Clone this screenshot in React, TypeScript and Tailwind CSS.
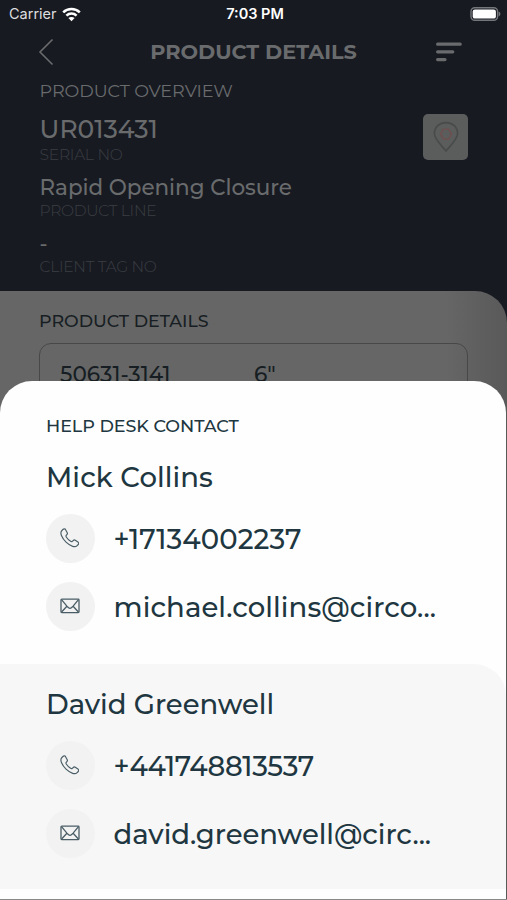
import clsx from 'clsx';
import React from 'react';

interface Contact {
  name: string;
  phone: string;
  email: string;
  nameClass: string;
  phoneClass: string;
  emailClass: string;
}

const contacts: Contact[] = [
  {
    name: 'Mick Collins',
    phone: '+17134002237',
    email: 'michael.collins@circo...',
    nameClass: 'tracking-[0.1px]',
    phoneClass: 'tracking-[0.1px]',
    emailClass: 'tracking-[0.1px]',
  },
  {
    name: 'David Greenwell',
    phone: '+441748813537',
    email: 'david.greenwell@circ...',
    nameClass: 'tracking-[-0.05px]',
    phoneClass: 'tracking-[-0.3px]',
    emailClass: 'tracking-[-0.05px]',
  },
];

const WifiIcon = () => (
  <svg width="19" height="15" viewBox="0 0 19 15" fill="none" stroke="#fff" strokeWidth="2.5">
    <path d="M1.2 5.4C5.8 0.9 13.2 0.9 17.8 5.4" />
    <path d="M4.4 8.7C7.3 5.9 11.7 5.9 14.6 8.7" />
    <path d="M9.5 14.2L6.4 11.1C8.2 9.5 10.8 9.5 12.6 11.1Z" fill="#fff" stroke="none" />
  </svg>
);

const BatteryIcon = () => (
  <svg width="31" height="14" viewBox="0 0 31 14" fill="none">
    <rect x="1" y="0.7" width="26.6" height="12.6" rx="3.8" stroke="#75777b" strokeWidth="1.4" />
    <rect x="2.7" y="2.4" width="23.2" height="9.2" rx="2.2" fill="#fff" />
    <path d="M28.6 4.6C31 5.4 31 8.6 28.6 9.4Z" fill="#75777b" />
  </svg>
);

const BackIcon = () => (
  <svg width="16" height="28" viewBox="0 0 16 28" fill="none" stroke="#696b6d" strokeWidth="1.6">
    <path d="M14.5 1.5L2 14L14.5 26.5" />
  </svg>
);

const SortIcon = () => (
  <svg width="26" height="20" viewBox="0 0 26 20" stroke="#696b6d" strokeWidth="3.2" strokeLinecap="round">
    <path d="M1.6 2.2H24.2M1.6 9.8H16.8M1.6 17.6H9" />
  </svg>
);

const PinIcon = () => (
  <svg width="26" height="32" viewBox="0 0 26 32" fill="none" strokeWidth="1.6">
    <path d="M13 30C9 25 1.4 18.5 1.4 12.6C1.4 6 6.5 1.6 13 1.6S24.6 6 24.6 12.6C24.6 18.5 17 25 13 30Z" stroke="#484b4a" />
    <path d="M7.5 13L10.2 8.3H15.8L18.4 13L15.8 18H10.6Z" stroke="#6d5050" strokeLinejoin="round" />
  </svg>
);

const PhoneIcon = () => (
  <svg width="19.5" height="19.5" viewBox="0 0 20 20" fill="none" stroke="#4a5d66" strokeWidth="1.2" strokeLinejoin="round">
    <path d="M5.3 1.1C4.5 0.6 3.7 0.8 3 1.5L1.8 2.8C0.6 4.1 0.8 6.1 1.6 8C2.5 10.2 4.1 12.5 6.2 14.5C8.4 16.6 10.8 18.1 13 18.8C15 19.4 16.5 19.1 17.6 18L18.7 16.9C19.4 16.2 19.4 15.3 18.7 14.7L15.7 12.6C15 12.1 14.2 12.2 13.6 12.8L12.6 13.7C12.1 14.2 11.5 14.1 10.9 13.7C9.2 12.6 7.6 11 6.4 9.2C6 8.6 6 8 6.4 7.5L7.2 6.6C7.7 6.1 7.7 5.4 7.4 4.8Z" />
  </svg>
);

const MailIcon = () => (
  <svg width="20" height="16" viewBox="0 0 20 16" fill="none" stroke="#4a5d66" strokeWidth="1.3" strokeLinejoin="round">
    <rect x="1" y="1.2" width="18" height="13.4" rx="0.8" />
    <path d="M1.5 1.7L6.9 8.2L8.6 9.7C9.5 10.4 10.5 10.4 11.4 9.7L13.1 8.2L18.5 1.7M1.6 14L6.9 8.2M18.4 14L13.1 8.2" />
  </svg>
);

const ContactRow = ({ icon, className, children }: { icon: React.ReactNode; className: string; children: React.ReactNode }) => (
  <div className="flex h-12 items-center gap-[18.5px]">
    <div className="flex h-[49px] w-[49px] shrink-0 items-center justify-center rounded-full bg-[#f2f2f2] pr-0.5">{icon}</div>
    <span className={clsx('pt-[3px] whitespace-nowrap text-[27.5px] leading-none font-medium', className)}>{children}</span>
  </div>
);

const ContactCard = ({ contact }: { contact: Contact }) => (
  <div className="flex flex-col">
    <h3 className={clsx('h-8 text-[27.5px] leading-8 font-medium', contact.nameClass)}>{contact.name}</h3>
    <div className="mt-[21px] flex flex-col gap-5">
      <ContactRow icon={<PhoneIcon />} className={contact.phoneClass}>{contact.phone}</ContactRow>
      <ContactRow icon={<MailIcon />} className={contact.emailClass}>{contact.email}</ContactRow>
    </div>
  </div>
);

export default function App() {
  return (
    <div className="relative h-[900px] w-[507px] overflow-hidden bg-[#171a21] font-['Montserrat','Inter',sans-serif] text-[#696b6d]">
      {/* Status bar */}
      <div className="grid h-7 grid-cols-3 items-center pr-[6px] pl-[9px] font-['Inter',sans-serif] text-white">
        <div className="flex items-center gap-[5px] text-[14.5px] text-[#dcdddf]">
          <span>Carrier</span>
          <WifiIcon />
        </div>
        <span className="text-center text-[14.5px] font-semibold">7:03 PM</span>
        <div className="-mt-px flex justify-end">
          <BatteryIcon />
        </div>
      </div>

      {/* Nav bar */}
      <div className="flex h-12 items-center justify-between pr-[45px] pl-[38px]">
        <BackIcon />
        <h1 className="ml-[17px] text-[20.8px] font-bold">PRODUCT DETAILS</h1>
        <SortIcon />
      </div>

      {/* Overview */}
      <div className="flex h-[215px] justify-between pr-[39px] pl-10">
        <div className="-ml-[0.4px] flex flex-col whitespace-nowrap">
          <h2 className="h-[30px] text-[17.6px] leading-[30px] tracking-[-0.1px]">PRODUCT OVERVIEW</h2>
          <div className="mt-2 h-[30px] text-[25px] leading-[30px] font-medium">UR013431</div>
          <div className="h-5 text-[15.5px] leading-[22px] font-light tracking-[-0.25px] text-[#3b3e43]">SERIAL NO</div>
          <div className="mt-[9px] h-7 text-[21.5px] leading-7 font-medium tracking-[-0.05px]">Rapid Opening Closure</div>
          <div className="h-[18px] text-[15.5px] leading-5 font-light tracking-[-0.3px] text-[#3b3e43]">PRODUCT LINE</div>
          <div className="mt-[10px] h-7 text-[21px] leading-[30px] font-medium">-</div>
          <div className="h-[18px] text-[15.5px] leading-5 font-light tracking-[-0.3px] text-[#3b3e43]">CLIENT TAG NO</div>
        </div>
        <div className="mt-[38px] flex h-[46px] w-[45px] items-center justify-center rounded-[5px] bg-[#5b5c5c]">
          <PinIcon />
        </div>
      </div>

      {/* Details panel */}
      <div className="h-[609px] rounded-tr-[32px] bg-linear-to-r from-[#666] from-88% to-[#595959] px-[39px] pt-5 text-[#171e23]">
        <h2 className="h-5 text-[17.4px] leading-5 font-medium">PRODUCT DETAILS</h2>
        <div className="mt-3 flex h-40 rounded-xl border-[1.5px] border-[#484848] px-5 pt-4 text-[21.6px] leading-[28px] font-medium">
          <span className="w-[194px]">50631-3141</span>
          <span>6"</span>
        </div>
      </div>

      {/* Help desk sheet */}
      <div className="absolute right-px bottom-px left-0 flex h-[518px] flex-col overflow-hidden rounded-t-[32px] bg-[#fefefe] text-[#203640]">
        <div className="h-[283px] px-[46px] pt-[34px]">
          <h2 className="mb-[24px] h-[22px] text-[17.5px] leading-[22px] font-medium tracking-[-0.05px]">HELP DESK CONTACT</h2>
          <ContactCard contact={contacts[0]} />
        </div>
        <div className="h-[225px] rounded-tr-[32px] bg-[#f7f7f7] px-[46px] pt-6">
          <ContactCard contact={contacts[1]} />
        </div>
      </div>

      <div className="absolute right-0 bottom-0 left-0 h-px bg-[#8a8a8a]" />
    </div>
  );
}
